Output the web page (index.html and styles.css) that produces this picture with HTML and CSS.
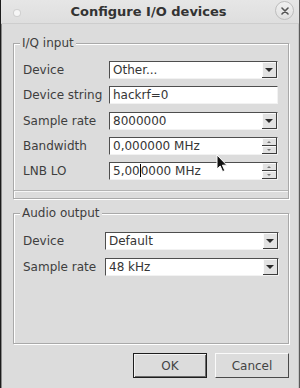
FILE: index.html
```html
<!DOCTYPE html>
<html>
<head>
<meta charset="utf-8">
<link rel="stylesheet" href="styles.css">
</head>
<body>
<div class="window">
  <div class="titlebar">
    <span class="dot"></span>
    <span class="title">Configure I/O devices</span>
    <span class="close">
      <svg width="8" height="8" viewBox="0 0 8 8"><path d="M1 1 L7 7 M7 1 L1 7" stroke="#555" stroke-width="1.6" stroke-linecap="round"/></svg>
    </span>
  </div>
  <div class="content">
    <fieldset class="group group-iq">
      <legend>I/Q input</legend>
      <div class="form form-iq">
        <label>Device</label>
        <div class="combo"><span class="value">Other...</span><span class="drop"><i class="arrow"></i></span></div>
        <label>Device string</label>
        <div class="edit"><span class="value">hackrf=0</span></div>
        <label class="shift">Sample rate</label>
        <div class="combo shift"><span class="value">8000000</span><span class="drop"><i class="arrow"></i></span></div>
        <label>Bandwidth</label>
        <div class="spin"><span class="value">0,000000 MHz</span><span class="spinbtns"><span class="sb"><i class="up"></i></span><span class="sb"><i class="down"></i></span></span></div>
        <label>LNB LO</label>
        <div class="spin"><span class="value">5,00<i class="caret"></i>0000 MHz</span><span class="spinbtns"><span class="sb"><i class="up"></i></span><span class="sb"><i class="down"></i></span></span></div>
      </div>
      <div class="sep"></div>
    </fieldset>
    <fieldset class="group group-audio">
      <legend>Audio output</legend>
      <div class="form form-audio">
        <label>Device</label>
        <div class="combo"><span class="value">Default</span><span class="drop"><i class="arrow"></i></span></div>
        <label>Sample rate</label>
        <div class="combo"><span class="value">48 kHz</span><span class="drop"><i class="arrow"></i></span></div>
      </div>
    </fieldset>
    <div class="buttons">
      <button class="btn btn-default">OK</button>
      <button class="btn">Cancel</button>
    </div>
  </div>
  <svg class="pointer" width="13" height="20" viewBox="0 0 13 20"><path d="M1 1 L1 15 L4.2 12 L6.6 17.6 L8.8 16.6 L6.4 11.2 L10.8 11.2 Z" fill="#111" stroke="#fff" stroke-width="1" stroke-linejoin="round"/></svg>
</div>
</body>
</html>
```
FILE: styles.css
```css
* { box-sizing: border-box; }
html, body {
  margin: 0;
  padding: 0;
  width: 300px;
  height: 388px;
  overflow: hidden;
  background: #dcdcdc;
}
body {
  font-family: "DejaVu Sans", "Liberation Sans", sans-serif;
  font-size: 12px;
  color: #3e3e3e;
}
.window {
  position: relative;
  width: 300px;
  height: 388px;
  background: #dcdcdc;
  border-left: 1px solid #1c1c1c;
  border-right: 1px solid #5a5a5a;
  box-shadow: inset 1px 0 0 #8a8a8a, inset -1px 0 0 #c4c4c4;
}
.titlebar {
  height: 24px;
  display: flex;
  align-items: center;
  padding: 0 0 1px 0;
  background: linear-gradient(#e6e6e6, #dedede);
  border-bottom: 1px solid #cdcdcd;
}
.dot {
  width: 6px;
  height: 6px;
  border-radius: 50%;
  background: #f6f6f6;
  box-shadow: 0 0 0 1px #d0d0d0;
  margin-left: 13px;
  margin-top: 3px;
}
.title {
  flex: 1;
  text-align: center;
  font-weight: bold;
  font-size: 13px;
  color: #333;
  margin-left: 2px;
}
.close {
  width: 19px;
  height: 19px;
  border-radius: 50%;
  background: linear-gradient(#f0f0f0, #e0e0e0);
  border: 1px solid #bdbdbd;
  display: flex;
  align-items: center;
  justify-content: center;
  margin-right: 5px;
  margin-top: -1px;
}
.close svg { display: block; }
.content {
  padding: 12px 10px 0 12px;
}
.group {
  margin: 0;
  min-width: 0;
  border: 1px solid #a9a9a9;
  box-shadow: inset 1px 1px 0 #fff, 1px 1px 0 #fff;
}
.group legend {
  margin-left: -3px;
  padding: 0 2px;
  line-height: 14px;
  background: #dcdcdc;
}
.group-iq {
  padding: 11px 10px 6px 9px;
}
.group-audio {
  margin-top: 7px;
  padding: 12px 9px 67px 9px;
}
.form {
  display: grid;
  row-gap: 7px;
  align-items: center;
}
.form-iq { grid-template-columns: 86px 1fr; }
.form-audio { grid-template-columns: 82px 1fr; row-gap: 8px; }
.form-iq .shift { margin-top: 1px; }
label { white-space: nowrap; }
.combo, .edit, .spin {
  height: 18px;
  display: flex;
  align-items: stretch;
  background: #fff;
  border-top: 1px solid #4e4e4e;
  border-left: 1px solid #4e4e4e;
  border-bottom: 1px solid #f2f2f2;
  border-right: 1px solid #f2f2f2;
  color: #353535;
}
.value {
  flex: 1;
  padding-left: 3px;
  line-height: 16px;
  white-space: nowrap;
  overflow: hidden;
}
.drop {
  width: 15px;
  background: #e2e2e2;
  border-right: 1px solid #3c3c3c;
  border-bottom: 1px solid #3c3c3c;
  box-shadow: inset 1px 1px 0 #fbfbfb;
  display: flex;
  align-items: center;
  justify-content: center;
}
.arrow {
  width: 0;
  height: 0;
  border-left: 4px solid transparent;
  border-right: 4px solid transparent;
  border-top: 4px solid #2a2a2a;
  margin-top: 1px;
}
.spinbtns {
  width: 15px;
  display: flex;
  flex-direction: column;
}
.sb {
  flex: 1;
  background: #e2e2e2;
  border-right: 1px solid #3c3c3c;
  border-bottom: 1px solid #3c3c3c;
  box-shadow: inset 1px 1px 0 #fbfbfb;
  display: flex;
  align-items: center;
  justify-content: center;
}
.up, .down {
  width: 0;
  height: 0;
  border-left: 2.5px solid transparent;
  border-right: 2.5px solid transparent;
}
.up { border-bottom: 2px solid #777; }
.down { border-top: 2px solid #777; }
.caret {
  display: inline-block;
  width: 1px;
  height: 13px;
  background: #000;
  vertical-align: -2px;
}
.sep {
  margin-top: 10px;
  height: 2px;
  border-top: 1px solid #b4b4b4;
  border-bottom: 1px solid #f6f6f6;
  margin-left: -9px;
  margin-right: -10px;
}
.buttons {
  display: flex;
  justify-content: flex-end;
  gap: 8px;
  margin-top: 9px;
  padding-right: 0;
}
.btn {
  width: 74px;
  height: 25px;
  font-family: "DejaVu Sans", "Liberation Sans", sans-serif;
  font-size: 12px;
  color: #444;
  background: #dcdcdc;
  border-top: 1px solid #fafafa;
  border-left: 1px solid #fafafa;
  border-right: 1px solid #4a4a4a;
  border-bottom: 1px solid #4a4a4a;
  padding: 0;
}
.btn-default {
  border: 1px solid #1e1e1e;
  box-shadow: inset 1px 1px 0 #f4f4f4, inset -1px -1px 0 #6a6a6a;
}
.pointer {
  position: absolute;
  left: 215px;
  top: 154px;
}
```
